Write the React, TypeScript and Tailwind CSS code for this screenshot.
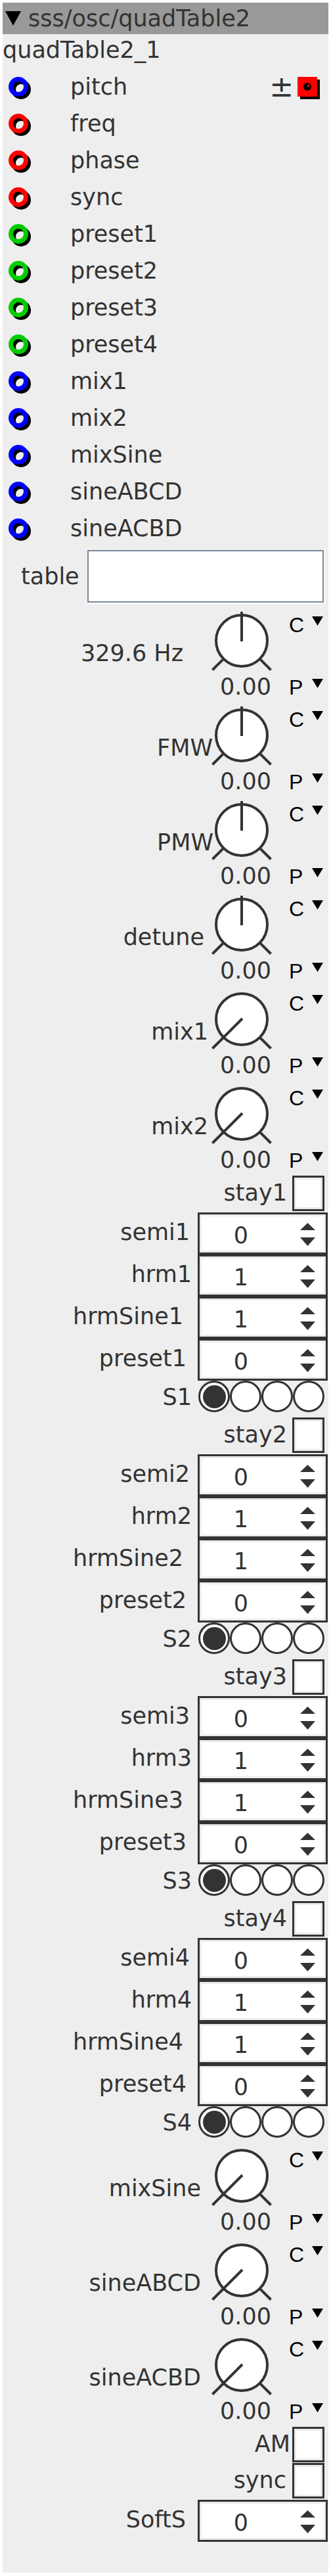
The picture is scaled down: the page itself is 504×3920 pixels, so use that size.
const inlets: { name: string; color: string }[] = [
  { name: "pitch", color: "#0000ff" },
  { name: "freq", color: "#ff0000" },
  { name: "phase", color: "#ff0000" },
  { name: "sync", color: "#ff0000" },
  { name: "preset1", color: "#00cc00" },
  { name: "preset2", color: "#00cc00" },
  { name: "preset3", color: "#00cc00" },
  { name: "preset4", color: "#00cc00" },
  { name: "mix1", color: "#0000ff" },
  { name: "mix2", color: "#0000ff" },
  { name: "mixSine", color: "#0000ff" },
  { name: "sineABCD", color: "#0000ff" },
  { name: "sineACBD", color: "#0000ff" },
];

const topKnobs = [
  { label: "329.6 Hz", mr: "mr-[43px]", center: true },
  { label: "FMW", mr: "mr-[-2px]", center: true },
  { label: "PMW", mr: "mr-[-3px]", center: true },
  { label: "detune", mr: "mr-[11px]", center: true },
  { label: "mix1", mr: "mr-[5px]", center: false },
  { label: "mix2", mr: "mr-[5px]", center: false },
];

const bottomKnobs = [
  { label: "mixSine", mr: "mr-[16px]", center: false },
  { label: "sineABCD", mr: "mr-[16px]", center: false },
  { label: "sineACBD", mr: "mr-[16px]", center: false },
];

function Ring({ color }: { color: string }) {
  return (
    <svg width="36" height="36" viewBox="0 0 36 36" className="ml-[9px] shrink-0">
      <circle cx="19" cy="21" r="11.5" fill="none" stroke="#000" strokeWidth="7" />
      <circle cx="15" cy="17" r="11.5" fill="none" stroke={color} strokeWidth="7" />
    </svg>
  );
}

function Tri({ className = "" }: { className?: string }) {
  return (
    <svg width="17" height="14" viewBox="0 0 17 14" className={className}>
      <polygon points="0,0 17,0 8.5,14" fill="#000" />
    </svg>
  );
}

function Knob({ label, mr, center }: { label: string; mr: string; center: boolean }) {
  const d = 31.1;
  return (
    <div className="flex h-[144px]">
      <div className={`min-w-0 flex-1 whitespace-nowrap pt-[49px] text-right leading-[40px] ${mr}`}>
        {label}
      </div>
      <div className="w-[102px] shrink-0">
        <svg width="92" height="100" viewBox="0 0 92 100" className="block">
          <circle cx="46" cy="50" r="39" fill="#fff" stroke="#333" strokeWidth="4" />
          <line x1="17.7" y1="78.3" x2="1.5" y2="94.5" stroke="#333" strokeWidth="4" />
          <line x1="74.3" y1="78.3" x2="90.5" y2="94.5" stroke="#333" strokeWidth="4" />
          {center ? (
            <line x1="46" y1="51" x2="46" y2="6" stroke="#333" strokeWidth="4" />
          ) : (
            <line x1="47" y1="49" x2={46 - d} y2={50 + d} stroke="#333" strokeWidth="4" />
          )}
        </svg>
        <div className="w-[92px] pl-[12px] text-center leading-[40px]">0.00</div>
      </div>
      <div className="w-[76px] shrink-0 pl-[16px] font-['Liberation_Sans',sans-serif] text-[32px] leading-[36px] text-black">
        <div className="mt-[8px] flex items-start">
          <span className="w-[35px]">C</span>
          <Tri className="mt-[5px]" />
        </div>
        <div className="mt-[59px] flex items-start">
          <span className="w-[35px]">P</span>
          <Tri className="mt-[5px]" />
        </div>
      </div>
    </div>
  );
}

function Check() {
  return (
    <div className="h-[54px] w-[49px] shrink-0 border-[3px] border-[#333]">
      <div className="h-full border-[3px] border-[#ececec] bg-white" />
    </div>
  );
}

function CheckRow({ label, gap, h }: { label: string; gap: string; h: string }) {
  return (
    <div className={`flex items-start justify-end pr-[6px] ${h}`}>
      <span className={`leading-[52px] ${gap}`}>{label}</span>
      <Check />
    </div>
  );
}

function NumRow({ label, value, gap }: { label: string; value: string; gap: string }) {
  return (
    <div className="flex h-[64px] items-start justify-end pr-[1px]">
      <span className={`whitespace-nowrap leading-[60px] ${gap}`}>{label}</span>
      <div className="h-[64px] w-[198px] shrink-0 border-[3px] border-[#333]">
        <div className="flex h-full border-[3px] border-[#ececec] bg-white">
          <div className="w-[120px] pt-[3px] text-center leading-[52px]">{value}</div>
          <svg width="23" height="35" viewBox="0 0 23 35" className="ml-[30px] mt-[10px]">
            <polygon points="0,11 11.5,0 23,11" fill="#333" />
            <polygon points="0,22 23,22 11.5,35" fill="#333" />
          </svg>
        </div>
      </div>
    </div>
  );
}

function Group({ n }: { n: number }) {
  return (
    <div>
      <CheckRow label={`stay${n}`} gap="mr-[8px]" h="h-[56px]" />
      <NumRow label={`semi${n}`} value="0" gap="mr-[12px]" />
      <NumRow label={`hrm${n}`} value="1" gap="mr-[9px]" />
      <NumRow label={`hrmSine${n}`} value="1" gap="mr-[22px]" />
      <NumRow label={`preset${n}`} value="0" gap="mr-[17px]" />
      <div className="flex h-[56px] items-start justify-end pr-[6px]">
        <span className="mr-[10px] leading-[50px]">S{n}</span>
        {[0, 1, 2, 3].map((i) => (
          <div
            key={i}
            className="flex h-[48px] w-[48px] items-center justify-center rounded-full border-[3px] border-[#333] bg-white"
          >
            {i === 0 && <div className="h-[35px] w-[35px] rounded-full bg-[#333]" />}
          </div>
        ))}
      </div>
    </div>
  );
}

export default function App() {
  return (
    <div className="bg-white p-[4px] font-['DejaVu_Sans',sans-serif] text-[35px] text-[#333]">
      <div className="w-[496px] bg-[#eeeeee] pb-[47px]">
        <div className="flex h-[48px] items-center bg-[#999999] leading-[48px]">
          <svg width="24" height="22" viewBox="0 0 24 22" className="ml-[4px]">
            <polygon points="0,0 24,0 12,22" fill="#000" />
          </svg>
          <span className="ml-[11px]">sss/osc/quadTable2</span>
        </div>
        <div className="h-[53px] leading-[48px]">quadTable2_1</div>

        {inlets.map((p) => (
          <div key={p.name} className="flex h-[56px] items-center">
            <Ring color={p.color} />
            <span className="mb-[3px] ml-[58px] leading-[40px]">{p.name}</span>
            {p.name === "pitch" && (
              <>
                <span className="mb-[3px] ml-auto text-[44px] leading-[40px]">±</span>
                <svg width="36" height="36" viewBox="0 0 36 36" className="ml-[6px] mr-[11px]">
                  <rect x="4" y="6" width="30" height="30" fill="#000" />
                  <rect x="0" y="2" width="30" height="30" fill="#ff0000" />
                  <circle cx="15" cy="17" r="6" fill="#000" />
                  <circle cx="16.5" cy="15.5" r="2" fill="#ff0000" />
                </svg>
              </>
            )}
          </div>
        ))}

        <div className="flex h-[92px] items-start pt-[2px]">
          <span className="w-[127px] shrink-0 pl-[28px] leading-[84px]">table</span>
          <div className="border-2 border-b-white border-l-[#eeeeee] border-r-white border-t-[#eeeeee]">
            <div className="h-[80px] w-[360px] border-2 border-[#778899] bg-white" />
          </div>
        </div>

        {topKnobs.map((k) => (
          <Knob key={k.label} {...k} />
        ))}

        {[1, 2, 3, 4].map((n) => (
          <Group key={n} n={n} />
        ))}

        {bottomKnobs.map((k) => (
          <Knob key={k.label} {...k} />
        ))}

        <CheckRow label="AM" gap="mr-[3px]" h="h-[55px]" />
        <CheckRow label="sync" gap="mr-[9px]" h="h-[56px]" />
        <NumRow label="SoftS" value="0" gap="mr-[18px]" />
      </div>
    </div>
  );
}
